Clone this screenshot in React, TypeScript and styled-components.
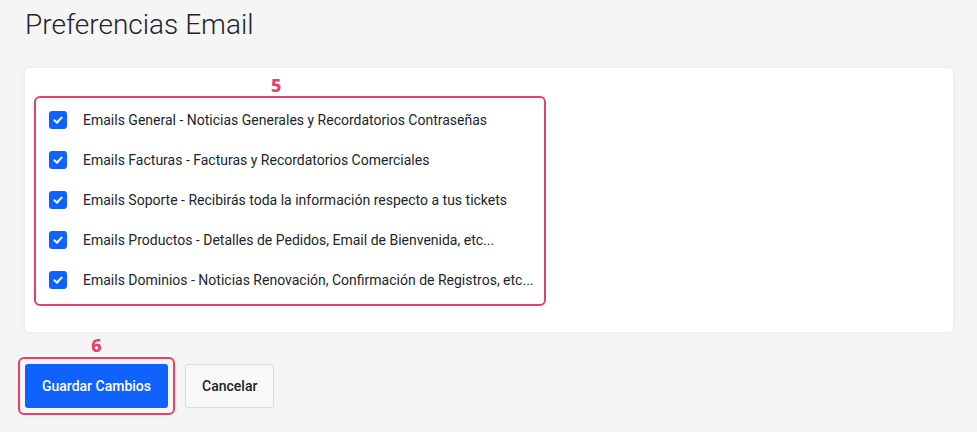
import { createGlobalStyle, styled } from "styled-components";

const GlobalStyle = createGlobalStyle`
  html, body {
    margin: 0;
    padding: 0;
    background: #f5f5f5;
  }
  body {
    font-family: Roboto, "Liberation Sans", sans-serif;
    color: #212529;
  }
`;

const PINK = "#e83e6c";
const BLUE = "#0f62fe";

const options = [
  "Emails General - Noticias Generales y Recordatorios Contraseñas",
  "Emails Facturas - Facturas y Recordatorios Comerciales",
  "Emails Soporte - Recibirás toda la información respecto a tus tickets",
  "Emails Productos - Detalles de Pedidos, Email de Bienvenida, etc...",
  "Emails Dominios - Noticias Renovación, Confirmación de Registros, etc...",
];

function CheckIcon() {
  return (
    <svg width="12" height="12" viewBox="0 0 12 12" fill="none">
      <path
        d="M2.4 6.3 L4.9 8.7 L9.6 3.6"
        stroke="#fff"
        strokeWidth="2"
        strokeLinecap="round"
        strokeLinejoin="round"
      />
    </svg>
  );
}

function App() {
  return (
    <S.Page>
      <GlobalStyle />
      <S.Title>Preferencias Email</S.Title>
      <S.Card>
        <S.Highlight>
          <S.Step $top={-22} $left={235}>5</S.Step>
          {options.map((text) => (
            <S.Row key={text}>
              <S.Check>
                <CheckIcon />
              </S.Check>
              <S.Label>{text}</S.Label>
            </S.Row>
          ))}
        </S.Highlight>
      </S.Card>
      <S.Actions>
        <S.ButtonMark>
          <S.StepCenter>6</S.StepCenter>
          <S.Primary>Guardar Cambios</S.Primary>
        </S.ButtonMark>
        <S.Secondary>Cancelar</S.Secondary>
      </S.Actions>
    </S.Page>
  );
}
export default App;

const Page = styled.div`
  padding: 0 24px 0 25px;
`;

const Title = styled.h2`
  margin: 8px 0 26px;
  font-size: 28px;
  line-height: 34px;
  font-weight: 300;
  color: #212529;
`;

const Card = styled.div`
  background: #fff;
  border-radius: 5px;
  box-shadow: 0 0 6px rgba(0, 0, 0, 0.06);
  padding: 28px 9px 26px;
`;

const Highlight = styled.div`
  position: relative;
  width: 512px;
  box-sizing: border-box;
  border: 2px solid ${PINK};
  border-radius: 6px;
  padding: 2px 13px 4px;
`;

const Step = styled.span<{ $top: number; $left: number }>`
  position: absolute;
  top: ${({ $top }) => $top}px;
  left: ${({ $left }) => $left}px;
  font-family: "Noto Sans", sans-serif;
  font-weight: 800;
  font-size: 18px;
  line-height: 18px;
  color: ${PINK};
`;

const StepCenter = styled.span`
  position: absolute;
  top: -23px;
  left: 50%;
  transform: translateX(-50%);
  font-family: "Noto Sans", sans-serif;
  font-weight: 800;
  font-size: 18px;
  line-height: 18px;
  color: ${PINK};
`;

const Row = styled.div`
  display: flex;
  align-items: center;
  height: 40px;
  gap: 16px;
`;

const Check = styled.span`
  display: flex;
  align-items: center;
  justify-content: center;
  width: 18px;
  height: 18px;
  border-radius: 3px;
  background: ${BLUE};
  flex-shrink: 0;
`;

const Label = styled.span`
  font-size: 14px;
  color: #212529;
  white-space: nowrap;
`;

const Actions = styled.div`
  display: flex;
  align-items: center;
  gap: 10px;
  margin: 25px 0 0 -7px;
`;

const ButtonMark = styled.div`
  position: relative;
  border: 2px solid ${PINK};
  border-radius: 6px;
  padding: 5px;
`;

const Primary = styled.button`
  display: block;
  height: 44px;
  padding: 0 17px;
  border: none;
  border-radius: 3px;
  background: ${BLUE};
  color: #fff;
  font-family: Roboto, "Liberation Sans", sans-serif;
  font-size: 14px;
  font-weight: 500;
`;

const Secondary = styled.button`
  height: 44px;
  padding: 0 16px;
  border: 1px solid #dcdcdc;
  border-radius: 3px;
  background: #f8f8f8;
  color: #212529;
  font-family: Roboto, "Liberation Sans", sans-serif;
  font-size: 14px;
  font-weight: 500;
`;

const S = {
  Page,
  Title,
  Card,
  Highlight,
  Step,
  StepCenter,
  Row,
  Check,
  Label,
  Actions,
  ButtonMark,
  Primary,
  Secondary,
};
